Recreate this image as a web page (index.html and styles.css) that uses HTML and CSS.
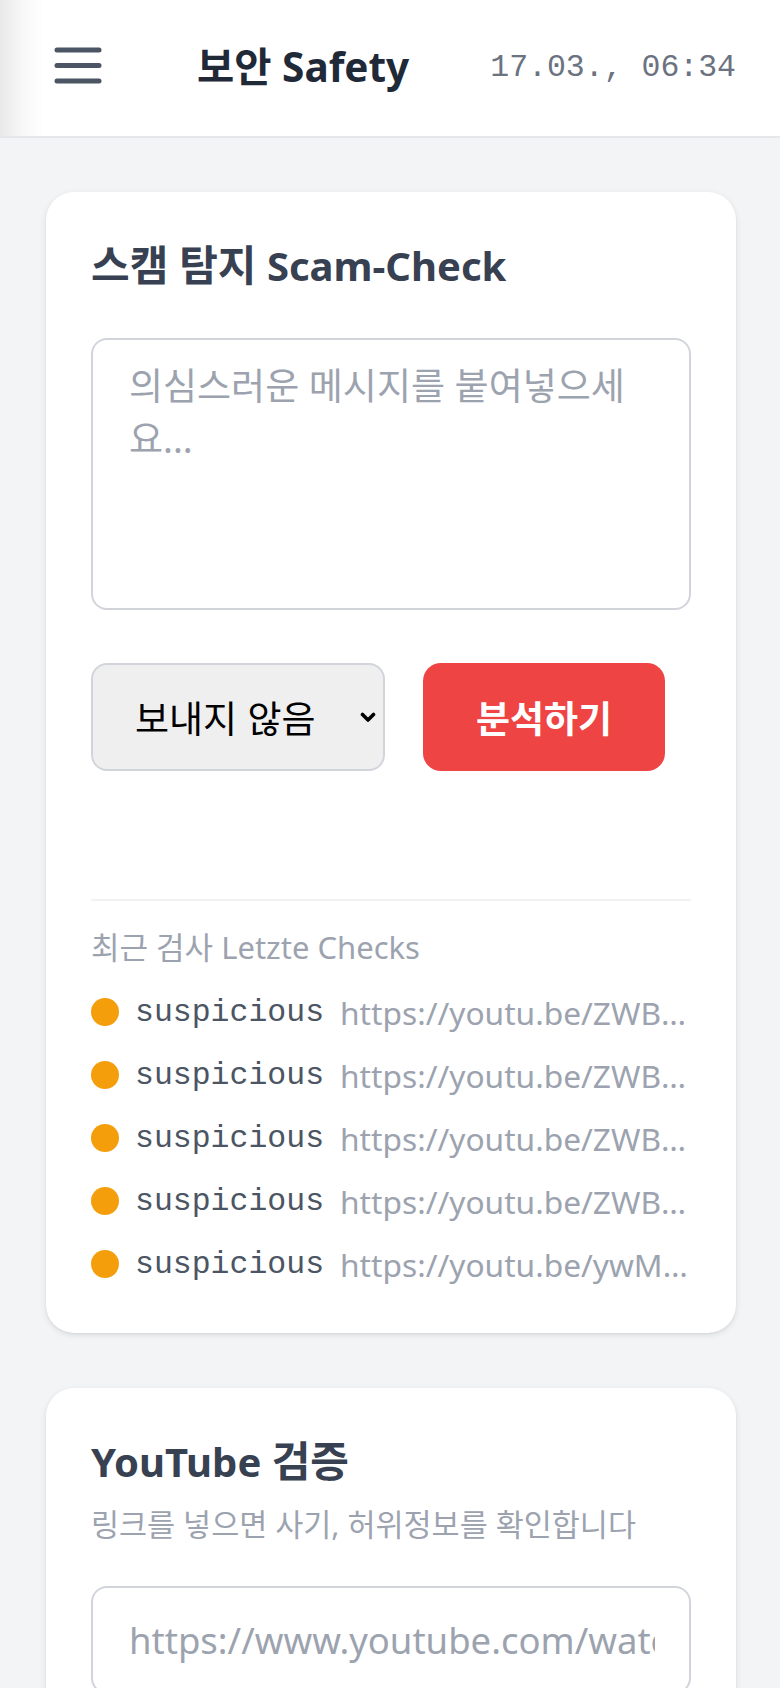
FILE: index.html
```html
<!DOCTYPE html>
<html lang="ko">
<head>
<meta charset="utf-8">
<title>보안 Safety</title>
<link rel="stylesheet" href="styles.css">
</head>
<body>
<header class="topbar">
  <button class="menu-btn" aria-label="Menu">
    <svg width="48" height="40" viewBox="0 0 48 40"><g stroke="#4b5563" stroke-width="5" stroke-linecap="round"><line x1="3" y1="4" x2="45" y2="4"/><line x1="3" y1="19.5" x2="45" y2="19.5"/><line x1="3" y1="35" x2="45" y2="35"/></g></svg>
  </button>
  <h1 class="brand">보안 Safety</h1>
  <div class="clock">17.03., 06:34</div>
</header>
<main class="page">
  <section class="card">
    <h2 class="card-title"><span class="ko">스캠 탐지</span> Scam-Check</h2>
    <textarea class="msg" placeholder="의심스러운 메시지를 붙여넣으세요..."></textarea>
    <div class="actions">
      <div class="select-wrap">
        <select class="sel"><option>보내지 않음</option></select>
        <svg class="chev" width="16" height="12" viewBox="0 0 16 12"><path d="M2.5 2.5 L8 8 L13.5 2.5" fill="none" stroke="#000" stroke-width="3.6" stroke-linecap="round" stroke-linejoin="round"/></svg>
      </div>
      <button class="analyze">분석하기</button>
    </div>
    <div class="recent">
      <div class="recent-label">최근 검사 Letzte Checks</div>
      <ul class="checks">
        <li class="check"><span class="dot"></span><span class="status">suspicious</span><span class="url">https://youtu.be/ZWBnM2xk0aQ?si=abc</span></li>
        <li class="check"><span class="dot"></span><span class="status">suspicious</span><span class="url">https://youtu.be/ZWBnM2xk0aQ?si=abc</span></li>
        <li class="check"><span class="dot"></span><span class="status">suspicious</span><span class="url">https://youtu.be/ZWBnM2xk0aQ?si=abc</span></li>
        <li class="check"><span class="dot"></span><span class="status">suspicious</span><span class="url">https://youtu.be/ZWBnM2xk0aQ?si=abc</span></li>
        <li class="check"><span class="dot"></span><span class="status">suspicious</span><span class="url">https://youtu.be/ywMq8r0Lk2s?si=xyz</span></li>
      </ul>
    </div>
  </section>
  <section class="card">
    <h2 class="card-title">YouTube <span class="ko">검증</span></h2>
    <p class="card-sub">링크를 넣으면 사기, 허위정보를 확인합니다</p>
    <input class="url-input" type="text" placeholder="https://www.youtube.com/watch?v=...">
  </section>
</main>
</body>
</html>
```
FILE: styles.css
```css
* { box-sizing: border-box; }
html, body { margin: 0; }
body {
  background: #f3f4f6;
  font-family: "Noto Sans", "Noto Sans CJK KR", sans-serif;
  color: #374151;
  height: 1688px;
  overflow: hidden;
}
.topbar {
  height: 138px;
  background: linear-gradient(to right, #e9e9e9 0, #f8f8f8 24px, #ffffff 44px);
  border-bottom: 2px solid #e5e7eb;
  display: flex;
  align-items: center;
  justify-content: space-between;
  padding: 0 44px 2px 38px;
}
.menu-btn {
  background: none;
  border: 0;
  padding: 16px;
  display: flex;
  margin-top: -2px;
}
.brand {
  margin: 0 0 0 -2px;
  font-size: 40.5px;
  font-weight: 700;
  color: #1f2937;
  line-height: 1.4;
}
.clock {
  font-family: "Liberation Mono", monospace;
  font-size: 31.5px;
  color: #6b7280;
}
.page {
  padding: 54px 44px 0 46px;
  display: flex;
  flex-direction: column;
  gap: 55px;
}
.card {
  background: #fff;
  border-radius: 28px;
  padding: 45px;
  box-shadow: 0 2px 6px rgba(0,0,0,0.10), 0 1px 2px rgba(0,0,0,0.05);
}
.card-title {
  margin: 0;
  font-size: 40px;
  font-weight: 700;
  line-height: 56px;
  color: #374151;
}
.ko { font-size: 1.05em; }
.msg {
  display: block;
  width: 100%;
  height: 272px;
  margin-top: 44px;
  border: 2px solid #d1d5db;
  border-radius: 16px;
  padding: 19px 34px 19px 36px;
  font-family: "Noto Sans", "Noto Sans CJK KR", sans-serif;
  font-size: 37px;
  line-height: 1.44;
  color: #374151;
  resize: none;
}
.msg::placeholder, .url-input::placeholder { color: #9ca3af; }
.actions {
  display: flex;
  gap: 38px;
  margin-top: 53px;
}
.select-wrap { position: relative; }
.sel {
  appearance: none;
  -webkit-appearance: none;
  width: 294px;
  height: 108px;
  background: #efefef;
  border: 2px solid #d1d5db;
  border-radius: 16px;
  padding: 0 0 0 42px;
  font-family: "Noto Sans CJK KR", sans-serif;
  font-size: 37px;
  color: #000;
}
.chev {
  position: absolute;
  right: 9px;
  top: 50%;
  margin-top: -5px;
  pointer-events: none;
}
.analyze {
  width: 242px;
  height: 108px;
  border: 0;
  border-radius: 18px;
  background: #ef4444;
  color: #fff;
  font-family: "Noto Sans", "Noto Sans CJK KR", sans-serif;
  font-size: 37px;
  font-weight: 700;
}
.recent {
  margin-top: 128px;
  border-top: 2px solid #f1f2f4;
  padding-top: 22px;
}
.recent-label {
  font-size: 31px;
  line-height: 48px;
  color: #9ca3af;
}
.checks {
  list-style: none;
  margin: 17px 0 0;
  padding: 0;
  display: flex;
  flex-direction: column;
  gap: 15px;
}
.check {
  display: flex;
  align-items: center;
  gap: 16px;
  height: 48px;
  min-width: 0;
}
.dot {
  flex: none;
  width: 28px;
  height: 28px;
  border-radius: 50%;
  background: #f59e0b;
}
.status {
  flex: none;
  font-family: "Liberation Mono", monospace;
  font-size: 31.5px;
  color: #4b5563;
}
.url {
  flex: 1;
  min-width: 0;
  font-size: 31.7px;
  color: #9ca3af;
  white-space: nowrap;
  overflow: hidden;
  text-overflow: ellipsis;
  margin-right: -4px;
}
.card-sub {
  margin: 12px 0 0;
  font-size: 30.5px;
  line-height: 1.5;
  color: #9ca3af;
}
.url-input {
  display: block;
  width: 100%;
  height: 108px;
  margin-top: 38px;
  border: 2px solid #d1d5db;
  border-radius: 16px;
  padding: 0 34px 0 36px;
  font-family: "Noto Sans", "Noto Sans CJK KR", sans-serif;
  font-size: 36.5px;
  color: #374151;
  background: #fff;
}
```
